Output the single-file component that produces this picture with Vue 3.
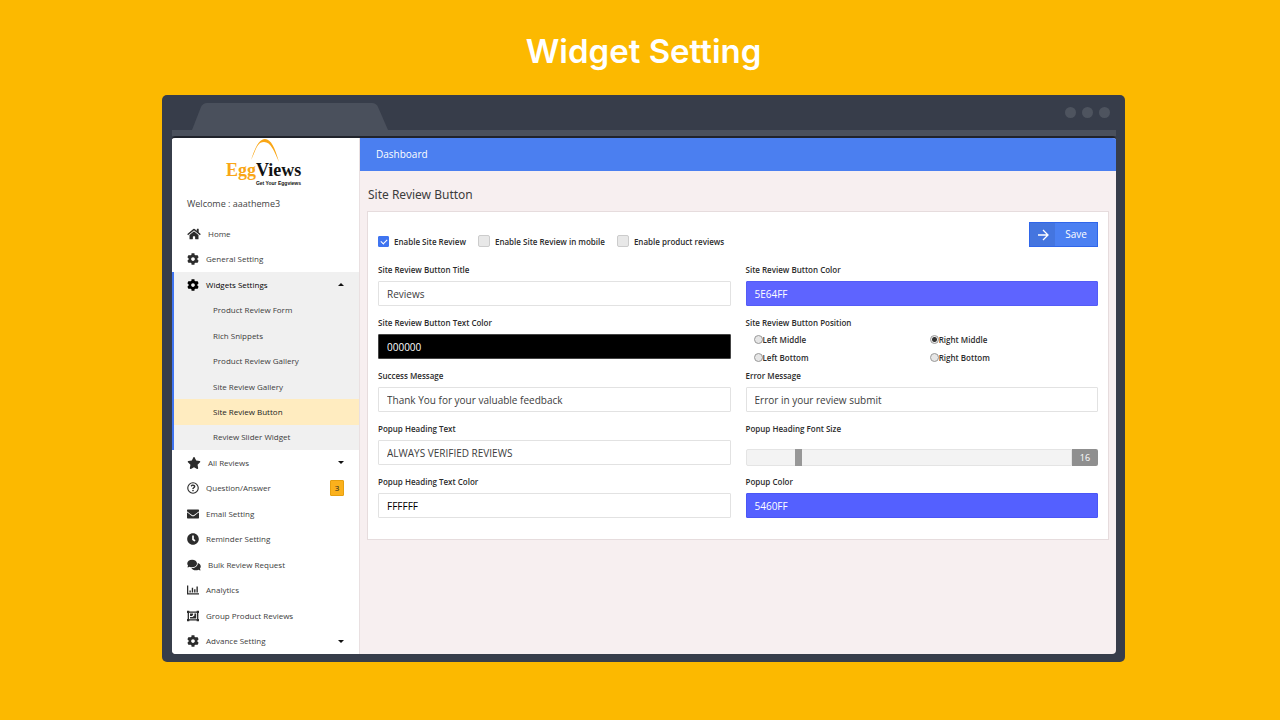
<script setup>
import { ref } from 'vue'

const icons = {
  home: { box: '0 0 576 512', wide: true, d: 'M280.37 148.26L96 300.11V464a16 16 0 0 0 16 16l112.06-.29a16 16 0 0 0 15.92-16V368a16 16 0 0 1 16-16h64a16 16 0 0 1 16 16v95.64a16 16 0 0 0 16 16.05L464 480a16 16 0 0 0 16-16V300L295.67 148.26a12.19 12.19 0 0 0-15.3 0zM571.6 251.47L488 182.56V44.05a12 12 0 0 0-12-12h-56a12 12 0 0 0-12 12v72.61L318.47 43a48 48 0 0 0-61 0L4.34 251.47a12 12 0 0 0-1.6 16.9l25.5 31A12 12 0 0 0 45.15 301l235.22-193.74a12.19 12.19 0 0 1 15.3 0L530.9 301a12 12 0 0 0 16.9-1.6l25.5-31a12 12 0 0 0-1.7-16.93z' },
  cog: { box: '0 0 512 512', d: 'M487.4 315.7l-42.6-24.6c4.3-23.2 4.3-47 0-70.2l42.6-24.6c4.9-2.8 7.1-8.6 5.5-14-11.1-35.6-30-67.8-54.7-94.6-3.8-4.1-10-5.1-14.8-2.3L380.8 110c-17.9-15.4-38.5-27.3-60.8-35.1V25.8c0-5.6-3.9-10.5-9.4-11.7-36.7-8.2-74.3-7.8-109.2 0-5.5 1.2-9.4 6.1-9.4 11.7V75c-22.2 7.9-42.8 19.8-60.8 35.1L88.7 85.5c-4.9-2.8-11-1.9-14.8 2.3-24.7 26.7-43.6 58.9-54.7 94.6-1.7 5.4.6 11.2 5.5 14L67.3 221c-4.3 23.2-4.3 47 0 70.2l-42.6 24.6c-4.9 2.8-7.1 8.6-5.5 14 11.1 35.6 30 67.8 54.7 94.6 3.8 4.1 10 5.1 14.8 2.3l42.6-24.6c17.9 15.4 38.5 27.3 60.8 35.1v49.2c0 5.6 3.9 10.5 9.4 11.7 36.7 8.2 74.3 7.8 109.2 0 5.5-1.2 9.4-6.1 9.4-11.7v-49.2c22.2-7.9 42.8-19.8 60.8-35.1l42.6 24.6c4.9 2.8 11 1.9 14.8-2.3 24.7-26.7 43.6-58.9 54.7-94.6 1.5-5.5-.7-11.3-5.6-14.1zM256 336c-44.1 0-80-35.9-80-80s35.9-80 80-80 80 35.9 80 80-35.9 80-80 80z' },
  star: { box: '0 0 576 512', wide: true, d: 'M259.3 17.8L194 150.2 47.9 171.5c-26.2 3.8-36.7 36.1-17.7 54.6l105.7 103-25 145.5c-4.5 26.3 23.2 46 46.4 33.7L288 439.6l130.7 68.7c23.2 12.2 50.9-7.4 46.4-33.7l-25-145.5 105.7-103c19-18.5 8.5-50.8-17.7-54.6L382 150.2 316.7 17.8c-11.7-23.6-45.6-23.9-57.4 0z' },
  question: { box: '0 0 512 512', d: 'M256 8a248 248 0 1 0 0 496 248 248 0 0 0 0-496zm0 448a200 200 0 1 1 0-400 200 200 0 0 1 0 400zM256 110c-46 0-77 20-99 55l42 33c16-20 29-33 54-33 20 0 40 11 40 30 0 38-67 39-67 94v14h60v-9c0-31 72-38 72-99 0-49-49-85-102-85zm0 220a35 35 0 1 0 0 70 35 35 0 0 0 0-70z' },
  mail: { box: '0 0 512 512', d: 'M502.3 190.8c3.9-3.1 9.7-.2 9.7 4.7V420c0 16-12 28-28 28H28c-16 0-28-12-28-28V195.6c0-5 5.7-7.8 9.7-4.7 22.4 17.4 52.1 39.5 154.1 113.6 21.1 15.4 56.7 47.8 92.2 47.6 35.7.3 72-32.8 92.3-47.6 102-74.1 131.6-96.3 154-113.7zM256 320c23.2.4 56.6-29.2 73.4-41.4 132.7-96.3 142.8-104.7 173.4-128.7 5.8-4.5 9.2-11.5 9.2-18.9V92c0-16-12-28-28-28H28C12 64 0 76 0 92v39c0 7.4 3.4 14.3 9.2 18.9 30.6 23.9 40.7 32.4 173.4 128.7 16.8 12.2 50.2 41.8 73.4 41.4z' },
  clock: { box: '0 0 512 512', d: 'M256 8C119 8 8 119 8 256s111 248 248 248 248-111 248-248S393 8 256 8zm57.1 350.1L224.9 294c-3.1-2.3-4.9-5.9-4.9-9.7V116c0-6.6 5.4-12 12-12h48c6.6 0 12 5.4 12 12v137.7l63.5 46.2c5.4 3.9 6.5 11.4 2.6 16.8l-28.2 38.8c-3.9 5.3-11.4 6.5-16.8 2.6z' },
  comments: { box: '0 0 576 512', wide: true, d: 'M416 192c0-88.4-93.1-160-208-160S0 103.6 0 192c0 34.3 14.1 65.9 38 92-13.4 30.2-35.5 54.2-35.8 54.5-2.2 2.3-2.8 5.7-1.5 8.7S4.8 352 8 352c36.6 0 66.9-12.3 88.7-25 32.2 15.7 70.3 25 111.3 25 114.9 0 208-71.6 208-160zm122 220c23.9-26 38-57.7 38-92 0-66.9-53.5-124.2-129.3-148.1.9 6.6 1.3 13.3 1.3 20.1 0 105.9-107.7 192-240 192-10.8 0-21.3-.8-31.7-1.9C207.8 439.6 281.8 480 368 480c41 0 79.1-9.2 111.3-25 21.8 12.7 52.1 25 88.7 25 3.2 0 6.1-1.9 7.3-4.8 1.3-2.9.7-6.3-1.5-8.7-.3-.3-22.4-24.2-35.8-54.5z' },
  chart: { box: '0 0 512 512', d: 'M0 64h54v330h458v54H0zM104 280h58v80h-58zM204 160h58v200h-58zM304 220h58v140h-58zM404 110h58v250h-58z' },
  group: { box: '0 0 512 512', d: 'M0 32h100v28h312V32h100v100h-28v248h28v100H412v-28H100v28H0V380h28V132H0zM84 132v248h16v16h312v-16h16V132h-16v-16H100v16zM316 150h76v210H130v-60h110l76-70zM130 150h130v60l-60 50h-70z' }
}

const before = [
  { label: 'Home', icon: 'home' },
  { label: 'General Setting', icon: 'cog' }
]
const sub = ['Product Review Form', 'Rich Snippets', 'Product Review Gallery', 'Site Review Gallery', 'Site Review Button', 'Review Slider Widget']
const after = [
  { label: 'All Reviews', icon: 'star', more: true },
  { label: 'Question/Answer', icon: 'question', badge: 3 },
  { label: 'Email Setting', icon: 'mail' },
  { label: 'Reminder Setting', icon: 'clock' },
  { label: 'Bulk Review Request', icon: 'comments' },
  { label: 'Analytics', icon: 'chart' },
  { label: 'Group Product Reviews', icon: 'group' },
  { label: 'Advance Setting', icon: 'cog', more: true }
]
const menu = [
  ...before.map(i => ({ ...i, kind: 'top' })),
  { label: 'Widgets Settings', icon: 'cog', kind: 'top', open: true },
  ...sub.map(label => ({ label, kind: 'sub', active: label === 'Site Review Button' })),
  ...after.map(i => ({ ...i, kind: 'top' }))
]

const checks = ref([
  { id: 'site', label: 'Enable Site Review', on: true },
  { id: 'mobile', label: 'Enable Site Review in mobile', on: false },
  { id: 'product', label: 'Enable product reviews', on: false }
])
const fields = ref([
  { id: 'title', label: 'Site Review Button Title', value: 'Reviews' },
  { id: 'color', label: 'Site Review Button Color', value: '5E64FF', tone: 'violet' },
  { id: 'text-color', label: 'Site Review Button Text Color', value: '000000', tone: 'black' },
  { id: 'position', label: 'Site Review Button Position', type: 'radio' },
  { id: 'success', label: 'Success Message', value: 'Thank You for your valuable feedback' },
  { id: 'error', label: 'Error Message', value: 'Error in your review submit' },
  { id: 'heading', label: 'Popup Heading Text', value: 'ALWAYS VERIFIED REVIEWS' },
  { id: 'size', label: 'Popup Heading Font Size', type: 'range' },
  { id: 'heading-color', label: 'Popup Heading Text Color', value: 'FFFFFF', tone: 'white' },
  { id: 'popup-color', label: 'Popup Color', value: '5460FF', tone: 'blue' }
])
const positions = ['Left Middle', 'Right Middle', 'Left Bottom', 'Right Bottom']
const position = ref('Right Middle')
const size = ref(16)
</script>

<template>
  <div class="page">
    <h1 class="headline">Widget Setting</h1>
    <div class="browser">
      <div class="chrome">
        <svg class="tab" viewBox="0 0 196 27" aria-hidden="true"><path d="M0 27 9 4Q11 0 15 0H180Q184 0 186 4L196 27Z" fill="#4a505c" /></svg>
        <div class="dots"><i></i><i></i><i></i></div>
      </div>
      <div class="toolbar"></div>
      <div class="app">
        <aside class="side">
          <svg class="logo" viewBox="0 0 80 48" role="img" aria-label="EggViews">
            <path d="M26 22C30 10 34 1 40 1S50 10 54 24C49 13 46 4 39 4S31 12 26 22Z" fill="#f9a616" />
            <text x="1" y="38" class="logo-name"><tspan class="egg">Egg</tspan><tspan class="views">Views</tspan></text>
            <text x="76" y="47" class="logo-tag">Get Your Eggviews</text>
          </svg>
          <p class="welcome">Welcome : aaatheme3</p>
          <nav class="menu">
            <a v-for="m in menu" :key="m.label" href="#" class="item" :class="[m.kind, { open: m.open, active: m.active }]">
              <svg v-if="m.icon" class="icon" :class="{ wide: icons[m.icon].wide }" :viewBox="icons[m.icon].box" aria-hidden="true"><path :d="icons[m.icon].d" fill="currentColor" fill-rule="evenodd" /></svg>
              <span class="text">{{ m.label }}</span>
              <span v-if="m.badge" class="badge">{{ m.badge }}</span>
              <i v-if="m.more || m.open" class="caret" :class="{ up: m.open }"></i>
            </a>
          </nav>
        </aside>
        <main class="main">
          <header class="bar">Dashboard</header>
          <h2 class="section">Site Review Button</h2>
          <form class="card" @submit.prevent>
            <div class="top-row">
              <div class="checks">
                <label v-for="c in checks" :key="c.id" class="check"><input v-model="c.on" type="checkbox" />{{ c.label }}</label>
              </div>
              <button class="save" type="submit">
                <span class="arrow"><svg viewBox="0 0 12 12" aria-hidden="true"><path d="M1 6H11M6 1L11 6L6 11" fill="none" stroke="#fff" stroke-width="1.3" /></svg></span>
                <span class="save-text">Save</span>
              </button>
            </div>
            <div class="grid">
              <div v-for="f in fields" :key="f.id" class="field">
                <template v-if="f.type === 'radio'">
                  <span :id="f.id" class="label">{{ f.label }}</span>
                  <div class="radios" role="radiogroup" :aria-labelledby="f.id">
                    <label v-for="p in positions" :key="p" class="radio"><input v-model="position" type="radio" name="position" :value="p" />{{ p }}</label>
                  </div>
                </template>
                <template v-else-if="f.type === 'range'">
                  <label class="label" :for="f.id">{{ f.label }}</label>
                  <div class="slider">
                    <input :id="f.id" v-model="size" type="range" min="8" max="60" />
                    <output :for="f.id">{{ size }}</output>
                  </div>
                </template>
                <template v-else>
                  <label class="label" :for="f.id">{{ f.label }}</label>
                  <input :id="f.id" v-model="f.value" type="text" class="box" :class="f.tone" />
                </template>
              </div>
            </div>
          </form>
        </main>
      </div>
    </div>
  </div>
</template>

<style>
body { background: #fcb900; }
</style>

<style scoped>
* { box-sizing: border-box; }
.page { min-height: 100vh; padding: 0 155px 58px 162px; background: #fcb900; display: flex; flex-direction: column; font-family: "Open Sans", "Noto Sans", sans-serif; color: #2c2c2c; }
.headline { margin: 0; height: 95px; padding-top: 30px; text-align: center; color: #fff; font: 600 33px/42px Inter, sans-serif; }
.browser { flex: 1; display: flex; flex-direction: column; background: #373d4a; border-radius: 5px; padding: 8px 9px 8px 10px; }
.chrome { height: 27px; padding-left: 20px; display: flex; justify-content: space-between; }
.tab { width: 196px; height: 27px; }
.dots { display: flex; gap: 6px; padding: 4px 6px 0 0; }
.dots i { width: 11px; height: 11px; border-radius: 50%; background: #4e545f; }
.toolbar { height: 6px; background: #4a505c; }
.app { flex: 1; display: flex; background: #f7eff0; border-top: 2px solid #20232b; border-radius: 4px; overflow: hidden; }
.side { width: 188px; flex: none; background: #fff; border-right: 1px solid #e9e0e1; display: flex; flex-direction: column; }
.logo { width: 80px; height: 48px; margin-left: 53px; flex: none; }
.logo-name { font: 700 18px "Liberation Serif", serif; }
.egg { fill: #f9a616; }
.views { fill: #111; }
.logo-tag { font: 700 5px "Liberation Sans", sans-serif; fill: #111; text-anchor: end; }
.welcome { margin: 10px 0 9px; padding-left: 15px; font-size: 9px; line-height: 16px; color: #444; }
.menu { flex: 1; display: grid; grid-auto-rows: 1fr; }
.item { display: flex; align-items: center; padding: 0 15px; color: #2c2c2c; text-decoration: none; font-size: 8px; line-height: 12px; }
.icon { width: 12px; height: 12px; margin-right: 7px; }
.icon.wide { width: 14px; }
.text { color: #3c3c3c; }
.item.open, .item.sub { background: #f0f0f0; border-left: 2px solid #3f74f0; padding-left: 13px; }
.item.open, .item.open .text { color: #000; }
.item.sub { padding-left: 39px; }
.item.active { background: #ffecc0; }
.item.active .text { color: #222; }
.badge { margin-left: auto; width: 14px; height: 16px; background: #fbb11c; border: 1px solid #e6a010; border-radius: 1px; line-height: 14px; text-align: center; color: #222; }
.caret { margin-left: auto; border: 3px solid transparent; border-top-color: #111; border-bottom: 0; }
.caret.up { border-top: 0; border-bottom: 3px solid #111; }
.main { flex: 1; min-width: 0; padding-bottom: 8px; }
.bar { height: 33px; padding: 0 16px; background: #4b7ff0; color: #fff; font-size: 10px; line-height: 33px; }
.section { margin: 14px 0 6px; padding-left: 8px; font: 400 12px/20px "Noto Sans", sans-serif; color: #3c3c3c; }
.card { margin: 0 7px; padding: 10px 10px 12px; background: #fff; border: 1px solid #e6dcdd; }
.top-row { display: flex; justify-content: space-between; height: 40px; }
.checks { display: flex; gap: 12px; padding-top: 12px; }
.check { display: flex; align-items: center; gap: 5px; height: 14px; font-size: 8px; font-weight: 600; white-space: nowrap; }
.check input { appearance: none; margin: 0; width: 12px; height: 12px; border: 1px solid #ccc; border-radius: 2px; background: #e8e8e8; }
.check input:checked { width: 11px; height: 11px; border-color: #3f74f0; border-radius: 1px; background: #3f74f0; display: grid; place-items: center; }
.check input:checked::after { content: ""; width: 5px; height: 3px; border: solid #fff; border-width: 0 0 1px 1px; transform: rotate(-45deg); }
.save { display: flex; width: 69px; height: 25px; padding: 0; border: 1px solid #2f66ea; background: #4b80f2; color: #fff; font: 10px/23px "Open Sans", sans-serif; }
.arrow { width: 25px; height: 23px; background: #4475df; display: grid; place-items: center; }
.arrow svg { width: 12px; height: 12px; }
.save-text { flex: 1; text-align: center; }
.grid { display: grid; grid-template-columns: 1fr 1fr; column-gap: 15px; grid-auto-rows: 53px; }
.field { min-width: 0; padding-top: 1px; }
.label { display: block; font-size: 8px; font-weight: 600; line-height: 14px; margin-bottom: 4px; }
.box { display: block; width: 100%; height: 25px; padding: 0 8px; border: 1px solid #e2e2e2; border-radius: 1px; background: #fff; color: #3c3c3c; font: 10px/23px "Open Sans", sans-serif; }
.violet { background: #5e64ff; border-color: #545cf6; color: #fff; }
.blue { background: #5460ff; border-color: #4a56f6; color: #fff; }
.black { background: #000; border-color: #444; color: #fff; }
.white { color: #000; }
.radios { display: grid; grid-template-columns: 1fr 1fr; column-gap: 8px; grid-auto-rows: 18px; padding-left: 8px; margin-top: -4px; }
.radio { display: flex; align-items: center; font-size: 8px; font-weight: 600; }
.radio input { appearance: none; margin: 0; width: 9px; height: 9px; border: 1px solid #999; border-radius: 50%; background: #e6e6e6; }
.radio input:checked { background: radial-gradient(circle, #333 0 2px, #eee 3px); }
.slider { display: flex; height: 17px; margin-top: 13px; }
.slider input { appearance: none; flex: 1; min-width: 0; height: 17px; margin: 0; background: #f3f3f3; border: 1px solid #e4e4e4; border-radius: 2px 0 0 2px; }
.slider input::-webkit-slider-thumb { appearance: none; width: 7px; height: 17px; background: #979797; }
.slider output { width: 26px; background: #8f8f8f; color: #fff; border-radius: 0 2px 2px 0; text-align: center; font-size: 9px; line-height: 17px; }
</style>
